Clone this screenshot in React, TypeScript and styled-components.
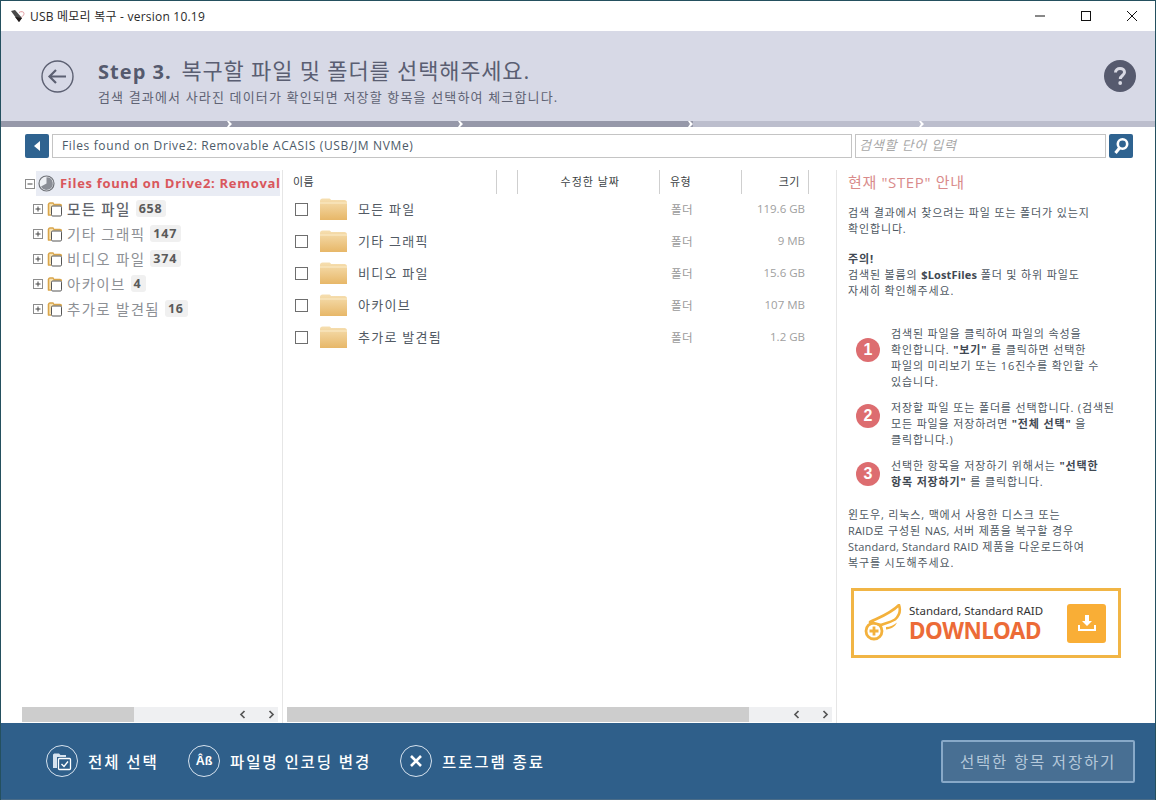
import React from "react";
import styled, { createGlobalStyle } from "styled-components";

const FONT = `"Open Sans", "Noto Sans CJK KR", sans-serif`;

const Global = createGlobalStyle`
  html, body { margin: 0; padding: 0; background: #fff; }
  * { box-sizing: border-box; }
  body { font-family: ${FONT}; }
`;

const Window = styled.div`
  width: 1156px;
  height: 800px;
  display: flex;
  flex-direction: column;
  overflow: hidden;
  border: 1px solid #24505f;
  border-bottom: 0;
  background: #fff;
`;

const TitleBar = styled.div`
  height: 30px;
  flex: none;
  display: flex;
  align-items: center;
  padding-left: 9px;
  font-size: 12px;
  color: #2a2a2a;
`;
const AppTitle = styled.span`
  margin-left: 4px;
  flex: 1;
  letter-spacing: 0.22px;
`;
const WinButton = styled.div`
  width: 46px;
  height: 30px;
  display: flex;
  align-items: center;
  justify-content: center;
`;

const Header = styled.header`
  height: 90px;
  flex: none;
  background: #d7d9e6;
  display: flex;
  align-items: center;
  padding: 0 19px 0 40px;
`;
const HeaderText = styled.div`
  margin-left: 24px;
  flex: 1;
  padding-top: 8px;
`;
const Heading = styled.h1`
  margin: 0;
  font-size: 22px;
  line-height: 28px;
  font-weight: 400;
  color: #5a5e72;
  letter-spacing: 0.82px;
  b { font-size: 20px; font-weight: 700; color: #555a6e; letter-spacing: 1.05px; margin-right: 3px; }
`;
const SubHeading = styled.p`
  margin: 3px 0 0;
  font-size: 13px;
  line-height: 16px;
  color: #5f6374;
  letter-spacing: 1.15px;
`;

const Progress = styled.div`
  height: 6px;
  flex: none;
  display: flex;
`;
const Segment = styled.div<{ $done: boolean }>`
  flex: 1;
  position: relative;
  background: ${(p) => (p.$done ? "#9698a9" : "#bcbecd")};
  svg { position: absolute; right: 0; top: 0; }
`;

const PathBar = styled.div`
  height: 24px;
  margin-top: 7px;
  flex: none;
  display: flex;
  padding-left: 24px;
`;
const BlueButton = styled.div`
  width: 24px;
  height: 24px;
  background: #2f6390;
  border-radius: 2px;
  display: flex;
  align-items: center;
  justify-content: center;
  flex: none;
`;
const PathField = styled.div`
  width: 800px;
  margin-left: 3px;
  border: 1px solid #c4c4c4;
  font-size: 12px;
  line-height: 22px;
  padding-left: 9px;
  color: #4c5a68;
  letter-spacing: 0.64px;
`;
const SearchField = styled.div`
  width: 251px;
  margin: 0 3px;
  border: 1px solid #c4c4c4;
  font-size: 13px;
  line-height: 21px;
  padding-left: 3px;
  font-style: italic;
  color: #a8a8a8;
  letter-spacing: 0.8px;
`;

const Content = styled.main`
  flex: 1;
  min-height: 0;
  display: grid;
  grid-template-columns: 282px 554px 1fr;
  margin-top: 12px;
`;

const TreePane = styled.section`
  border-right: 1px solid #e6e6e6;
  position: relative;
  padding: 1px 0 0 24px;
  display: flex;
  flex-direction: column;
`;
const RootRow = styled.div`
  height: 25px;
  display: flex;
  align-items: center;
  white-space: nowrap;
`;
const RootLabel = styled.div`
  width: 244px;
  margin-left: 1px;
  height: 25px;
  background: #e9ecf4;
  display: flex;
  align-items: center;
  padding: 0 0 2px 2px;
  font-size: 13px;
  font-weight: 700;
  color: #d9575c;
  letter-spacing: 0.7px;
  span { margin-left: 5px; }
`;
const TreeRow = styled.div`
  height: 25px;
  display: flex;
  align-items: center;
  padding-left: 8px;
`;
const TreeName = styled.span<{ $active?: boolean }>`
  margin-left: 4px;
  font-size: 14.5px;
  letter-spacing: 1.3px;
  color: ${(p) => (p.$active ? "#62656c" : "#8d9095")};
  font-weight: ${(p) => (p.$active ? 500 : 400)};
`;
const Count = styled.span`
  margin-left: 5px;
  padding: 0 4px 0 3px;
  height: 17px;
  line-height: 17px;
  border-radius: 3px;
  background: #f0f0f0;
  color: #5a5a5a;
  font-size: 12.5px;
  font-weight: 700;
  letter-spacing: 0.8px;
`;
const TreeScroll = styled.div`
  position: absolute;
  left: 21px;
  right: 4px;
  bottom: 1px;
`;

const ScrollBar = styled.div`
  height: 15px;
  background: #eff0f2;
  display: flex;
  align-items: center;
`;
const Thumb = styled.div<{ $w: number }>`
  width: ${(p) => p.$w}px;
  height: 15px;
  background: #cdcdcd;
  flex: none;
`;
const ScrollArrows = styled.div`
  margin-left: auto;
  width: 41px;
  display: flex;
  justify-content: space-between;
  padding: 0 3px 0 2px;
  align-items: center;
`;

const ListPane = styled.section`
  border-right: 1px solid #e6e6e6;
  position: relative;
  padding-left: 4px;
`;
const ListHeader = styled.div`
  height: 24px;
  display: grid;
  grid-template-columns: 210px 21px 142px 82px 67px;
  font-size: 11px;
  line-height: 24px;
  color: #3b3f44;
  letter-spacing: 0.5px;
`;
const HeadCell = styled.div<{ $align?: string; $pad?: number; $pr?: number }>`
  border-right: 1px solid #cfcfcf;
  text-align: ${(p) => p.$align ?? "left"};
  padding-left: ${(p) => p.$pad ?? 0}px;
  padding-right: ${(p) => p.$pr ?? 0}px;
`;
const DateHead = styled(HeadCell)`
  letter-spacing: 1px;
`;
const FileRows = styled.div`
  margin-top: -2px;
`;
const FileRow = styled.div`
  height: 32px;
  display: flex;
  align-items: center;
  padding-left: 8px;
`;
const Check = styled.div`
  width: 13px;
  height: 13px;
  margin-top: 2px;
  border: 1px solid #6e6e6e;
  background: #fff;
  flex: none;
`;
const FileName = styled.span`
  margin-left: 11px;
  width: 313px;
  font-size: 13px;
  letter-spacing: 1.25px;
  color: #525a64;
`;
const FileType = styled.span`
  width: 70px;
  padding-top: 1px;
  font-size: 11.5px;
  color: #9a9a9a;
  letter-spacing: 0.5px;
`;
const FileSize = styled.span`
  width: 64px;
  padding-top: 1px;
  font-size: 11.5px;
  color: #a0a0a0;
  text-align: right;
`;
const ListScroll = styled.div`
  position: absolute;
  left: 4px;
  right: 4px;
  bottom: 1px;
`;

const HelpPane = styled.aside`
  padding: 1px 0 0 11px;
  width: 300px;
  color: #4e5862;
`;
const HelpTitle = styled.h2`
  margin: 0 0 12px;
  font-size: 15px;
  line-height: 22px;
  font-weight: 400;
  color: #d98b8b;
  letter-spacing: 0.65px;
`;
const HelpText = styled.p`
  margin: 0 0 14px;
  font-size: 11px;
  line-height: 16px;
  letter-spacing: 0.85px;
  white-space: nowrap;
  b { font-weight: 700; color: #3f4852; }
`;
const Latin = styled.span`
  letter-spacing: 0.15px;
`;
const Steps = styled.div`
  margin: 27px 0 17px;
  display: flex;
  flex-direction: column;
  gap: 10px;
`;
const StepRow = styled.div`
  display: flex;
  align-items: center;
`;
const StepBullet = styled.div<{ $lift: number }>`
  width: 24px;
  height: 24px;
  margin: 0 11px ${(p) => p.$lift}px 8px;
  border-radius: 50%;
  background: #dd6d70;
  color: #fff;
  font-family: "Liberation Sans", sans-serif;
  font-weight: 700;
  font-size: 16px;
  display: flex;
  align-items: center;
  justify-content: center;
  flex: none;
`;
const StepText = styled(HelpText)`
  margin: 0;
`;
const Banner = styled.div`
  margin: 17px 0 0 3px;
  width: 270px;
  height: 70px;
  border: 3px solid #f1b545;
  display: flex;
  align-items: center;
  padding-left: 10px;
`;
const BannerText = styled.div`
  margin-left: 7px;
  padding-top: 2px;
  flex: 1;
`;
const BannerSmall = styled.div`
  font-size: 11.5px;
  line-height: 14px;
  color: #333;
  font-family: "Noto Sans", sans-serif;
`;
const BannerBig = styled.div`
  font-size: 22.5px;
  line-height: 26px;
  font-weight: 700;
  letter-spacing: -0.45px;
  color: #ec6b37;
  font-family: "Noto Sans", sans-serif;
`;
const BannerIcon = styled.div`
  width: 39px;
  height: 39px;
  margin-right: 12px;
  border-radius: 3px;
  background: #f9ae36;
  display: flex;
  align-items: center;
  justify-content: center;
`;

const Footer = styled.footer`
  height: 77px;
  flex: none;
  margin: 0 -1px;
  background: #2f5f8a;
  border-bottom: 1px solid #4a6c88;
  display: flex;
  align-items: center;
  padding: 0 21px 0 46px;
`;
const FootAction = styled.div<{ $w: number }>`
  width: ${(p) => p.$w}px;
  display: flex;
  align-items: center;
  color: #fff;
  font-size: 15.5px;
  font-weight: 500;
  letter-spacing: 1.9px;
`;
const FootIcon = styled.div`
  width: 32px;
  height: 32px;
  border: 1.5px solid #d6e2ee;
  border-radius: 50%;
  margin-right: 10px;
  display: flex;
  align-items: center;
  justify-content: center;
  flex: none;
  font-family: "Liberation Sans", sans-serif;
  font-size: 12.5px;
  font-weight: 700;
  letter-spacing: 0;
`;
const SaveButton = styled.div`
  margin-left: auto;
  width: 194px;
  height: 43px;
  border: 2px solid #88a9c8;
  border-radius: 2px;
  background: #486f93;
  color: #b5c8da;
  display: flex;
  align-items: center;
  justify-content: center;
  font-size: 15.5px;
  letter-spacing: 1.8px;
`;

const Chevron = ({ dir }: { dir: "l" | "r" }) => (
  <svg width="8" height="9" viewBox="0 0 8 9">
    <path d={dir === "l" ? "M5.5 1L2 4.5L5.5 8" : "M2.5 1L6 4.5L2.5 8"} fill="none" stroke="#555" strokeWidth="1.7" />
  </svg>
);

const AppIcon = () => (
  <svg width="16" height="14" viewBox="0 0 16 14">
    <path d="M1 2L5 1L12 9L9 13Z" fill="#4a4a4a" />
    <path d="M5 8L9 13L12 9Z" fill="#1f1a1a" />
    <path d="M9 3.5C11 2 14 2.5 14 4.5C14 6 12.5 7.5 11.5 8" fill="none" stroke="#e29aa0" strokeWidth="1" />
  </svg>
);

const PlusBox = ({ minus }: { minus?: boolean }) => (
  <svg width="10" height="10" viewBox="0 0 10 10" style={{ flex: "none" }}>
    <rect x="0.5" y="0.5" width="9" height="9" fill="#fff" stroke="#8c8c8c" />
    <path d={minus ? "M2.5 5H7.5" : "M2.5 5H7.5M5 2.5V7.5"} stroke="#444" strokeWidth="1" />
  </svg>
);

const TreeFolder = () => (
  <svg width="16" height="16" viewBox="0 0 16 16" style={{ marginLeft: 4, flex: "none" }}>
    <path d="M1.5 14V3.5C1.5 2.5 2 2 3 2H6L7 3.5H13C14 3.5 14.5 4 14.5 5" fill="#f7e3b4" stroke="#d9a54a" strokeWidth="1.3" />
    <path d="M1.5 3V14H4" fill="none" stroke="#d9a54a" strokeWidth="1.3" />
    <rect x="4.5" y="5" width="10" height="10" rx="1.2" fill="#fff" stroke="#555" strokeWidth="1" />
  </svg>
);

const PieIcon = () => (
  <svg width="17" height="17" viewBox="0 0 17 17" style={{ flex: "none", marginTop: 2 }}>
    <circle cx="8.5" cy="8.5" r="7.5" fill="#eef0f4" stroke="#6f7278" strokeWidth="1.2" />
    <path d="M8.5 8.5V2.2A6.3 6.3 0 1 1 3 11.6Z" fill="#8b8e96" />
  </svg>
);

const Folder = () => (
  <svg width="27" height="22" viewBox="0 0 27 22" style={{ marginLeft: 12, marginTop: 2, flex: "none" }}>
    <defs>
      <linearGradient id="fg" x1="0" y1="0" x2="0" y2="1">
        <stop offset="0" stopColor="#f6dfb1" />
        <stop offset="1" stopColor="#e7b768" />
      </linearGradient>
    </defs>
    <path d="M0 3C0 1.5 1 .5 2.5 .5H9C10 .5 10.5 1 11 2H24.5C26 2 27 3 27 4.5V22H0Z" fill="url(#fg)" />
    <path d="M0 5H27" stroke="#fbecc9" strokeWidth="1" />
  </svg>
);

const Wing = () => (
  <svg width="38" height="38" viewBox="0 0 38 38" style={{ flex: "none" }}>
    <circle cx="10" cy="27" r="8" fill="none" stroke="#f3b13c" strokeWidth="2.8" />
    <path d="M5.5 27H14.5M10 22.5V31.5" stroke="#f3b13c" strokeWidth="2.8" />
    <path d="M6 18C14 14 26 10 35 1C37 7 35 12 31 15.5C25 19 21 19 17 21Z" fill="#fff" stroke="#f3b13c" strokeWidth="2.6" strokeLinejoin="round" />
    <path d="M22 23C26 23 30 21 33 18.5C31 23 27 25 22 25.5Z" fill="#f3b13c" />
  </svg>
);

const treeItems = [
  { name: "모든 파일", count: "658", active: true },
  { name: "기타 그래픽", count: "147" },
  { name: "비디오 파일", count: "374" },
  { name: "아카이브", count: "4" },
  { name: "추가로 발견됨", count: "16" },
];

const files = [
  { name: "모든 파일", size: "119.6 GB" },
  { name: "기타 그래픽", size: "9 MB" },
  { name: "비디오 파일", size: "15.6 GB" },
  { name: "아카이브", size: "107 MB" },
  { name: "추가로 발견됨", size: "1.2 GB" },
];

const steps = [
  {
    n: "1",
    lift: 16,
    body: (
      <>
        검색된 파일을 클릭하여 파일의 속성을
        <br />
        확인합니다. <b>"보기"</b> 를 클릭하면 선택한
        <br />
        파일의 미리보기 또는 16진수를 확인할 수
        <br />
        있습니다.
      </>
    ),
  },
  {
    n: "2",
    lift: 16,
    body: (
      <>
        저장할 파일 또는 폴더를 선택합니다. (검색된
        <br />
        모든 파일을 저장하려면 <b>"전체 선택"</b> 을
        <br />
        클릭합니다.)
      </>
    ),
  },
  {
    n: "3",
    lift: 0,
    body: (
      <>
        선택한 항목을 저장하기 위해서는 <b>"선택한</b>
        <br />
        <b>항목 저장하기"</b> 를 클릭합니다.
      </>
    ),
  },
];

const Scroller = ({ thumb }: { thumb: number }) => (
  <ScrollBar>
    <Thumb $w={thumb} />
    <ScrollArrows>
      <Chevron dir="l" />
      <Chevron dir="r" />
    </ScrollArrows>
  </ScrollBar>
);

export default function App() {
  return (
    <>
      <Global />
      <Window>
        <TitleBar>
          <AppIcon />
          <AppTitle>USB 메모리 복구 - version 10.19</AppTitle>
          <WinButton>
            <svg width="12" height="12" viewBox="0 0 12 12">
              <path d="M1 6H11" stroke="#111" strokeWidth="1" />
            </svg>
          </WinButton>
          <WinButton>
            <svg width="12" height="12" viewBox="0 0 12 12">
              <rect x="1.5" y="1.5" width="9" height="9" fill="none" stroke="#111" strokeWidth="1" />
            </svg>
          </WinButton>
          <WinButton>
            <svg width="12" height="12" viewBox="0 0 12 12">
              <path d="M1 1L11 11M11 1L1 11" stroke="#111" strokeWidth="1" />
            </svg>
          </WinButton>
        </TitleBar>

        <Header>
          <svg width="33" height="33" viewBox="0 0 33 33" style={{ flex: "none" }}>
            <circle cx="16.5" cy="16.5" r="15.5" fill="none" stroke="#5c6072" strokeWidth="1.4" />
            <path d="M25 16.5H9M15 10L8.5 16.5L15 23" fill="none" stroke="#5c6072" strokeWidth="2.2" />
          </svg>
          <HeaderText>
            <Heading>
              <b>Step 3.</b> 복구할 파일 및 폴더를 선택해주세요.
            </Heading>
            <SubHeading>검색 결과에서 사라진 데이터가 확인되면 저장할 항목을 선택하여 체크합니다.</SubHeading>
          </HeaderText>
          <svg width="32" height="32" viewBox="0 0 32 32" style={{ flex: "none" }}>
            <circle cx="16" cy="16" r="16" fill="#565a6e" />
            <path d="M11.5 12.5C11.5 10 13.5 8.5 16 8.5C18.5 8.5 20.5 10 20.5 12.3C20.5 15.5 16.3 15.5 16.3 19" fill="none" stroke="#d9dae4" strokeWidth="3" />
            <circle cx="16.2" cy="23" r="1.9" fill="#d9dae4" />
          </svg>
        </Header>

        <Progress>
          {[true, true, true, false, false].map((done, i) => (
            <Segment key={i} $done={done}>
              {i < 4 && (
                <svg width="5" height="6" viewBox="0 0 5 6">
                  <path d="M0 0H2L5 3L2 6H0L2 3Z" fill="#fff" />
                </svg>
              )}
            </Segment>
          ))}
        </Progress>

        <PathBar>
          <BlueButton>
            <svg width="8" height="10" viewBox="0 0 8 10">
              <path d="M7 0V10L1 5Z" fill="#fff" />
            </svg>
          </BlueButton>
          <PathField>Files found on Drive2: Removable ACASIS (USB/JM NVMe)</PathField>
          <SearchField>검색할 단어 입력</SearchField>
          <BlueButton>
            <svg width="18" height="18" viewBox="0 0 18 18">
              <circle cx="10.5" cy="7" r="4.7" fill="none" stroke="#fff" strokeWidth="2.6" />
              <path d="M7.5 11L3.5 16" stroke="#fff" strokeWidth="3" />
            </svg>
          </BlueButton>
        </PathBar>

        <Content>
          <TreePane>
            <RootRow>
              <PlusBox minus />
              <RootLabel>
                <PieIcon />
                <span>Files found on Drive2: Removal</span>
              </RootLabel>
            </RootRow>
            {treeItems.map((t) => (
              <TreeRow key={t.name}>
                <PlusBox />
                <TreeFolder />
                <TreeName $active={t.active}>{t.name}</TreeName>
                <Count>{t.count}</Count>
              </TreeRow>
            ))}
            <TreeScroll>
              <Scroller thumb={112} />
            </TreeScroll>
          </TreePane>

          <ListPane>
            <ListHeader>
              <HeadCell $pad={6}>이름</HeadCell>
              <HeadCell />
              <DateHead $align="right" $pr={39}>수정한 날짜</DateHead>
              <HeadCell $pad={10}>유형</HeadCell>
              <HeadCell $align="right" $pr={8}>크기</HeadCell>
            </ListHeader>
            <FileRows>
              {files.map((f) => (
                <FileRow key={f.name}>
                  <Check />
                  <Folder />
                  <FileName>{f.name}</FileName>
                  <FileType>폴더</FileType>
                  <FileSize>{f.size}</FileSize>
                </FileRow>
              ))}
            </FileRows>
            <ListScroll>
              <Scroller thumb={462} />
            </ListScroll>
          </ListPane>

          <HelpPane>
            <HelpTitle>현재 "STEP" 안내</HelpTitle>
            <HelpText>
              검색 결과에서 찾으려는 파일 또는 폴더가 있는지
              <br />
              확인합니다.
            </HelpText>
            <HelpText>
              <b>주의!</b>
              <br />
              검색된 볼륨의 <b><Latin>$LostFiles</Latin></b> 폴더 및 하위 파일도
              <br />
              자세히 확인해주세요.
            </HelpText>
            <Steps>
              {steps.map((s) => (
                <StepRow key={s.n}>
                  <StepBullet $lift={s.lift}>{s.n}</StepBullet>
                  <StepText>{s.body}</StepText>
                </StepRow>
              ))}
            </Steps>
            <HelpText>
              윈도우, 리눅스, 맥에서 사용한 디스크 또는
              <br />
              <Latin>RAID</Latin>로 구성된 <Latin>NAS,</Latin> 서버 제품을 복구할 경우
              <br />
              <Latin>Standard, Standard RAID</Latin> 제품을 다운로드하여
              <br />
              복구를 시도해주세요.
            </HelpText>
            <Banner>
              <Wing />
              <BannerText>
                <BannerSmall>Standard, Standard RAID</BannerSmall>
                <BannerBig>DOWNLOAD</BannerBig>
              </BannerText>
              <BannerIcon>
                <svg width="20" height="20" viewBox="0 0 20 20">
                  <path d="M8 2H12V8H15L10 13L5 8H8Z" fill="#fff" />
                  <path d="M2 12V17H18V12" fill="none" stroke="#fff" strokeWidth="2" />
                </svg>
              </BannerIcon>
            </Banner>
          </HelpPane>
        </Content>

        <Footer>
          <FootAction $w={142}>
            <FootIcon>
              <svg width="22" height="22" viewBox="0 0 22 22">
                <path d="M2 18V5C2 4 3 3.5 4 3.5H8L9.5 5H15V7H6V18Z" fill="#d6e2ee" />
                <rect x="7.5" y="8.5" width="12" height="11" rx="1" fill="#2f5f8a" stroke="#fff" strokeWidth="1.3" />
                <path d="M10.5 14L13 16.5L17 11.5" fill="none" stroke="#fff" strokeWidth="1.4" />
              </svg>
            </FootIcon>
            전체 선택
          </FootAction>
          <FootAction $w={212}>
            <FootIcon>Âß</FootIcon>
            파일명 인코딩 변경
          </FootAction>
          <FootAction $w={180}>
            <FootIcon>
              <svg width="14" height="14" viewBox="0 0 14 14">
                <path d="M2 2L12 12M12 2L2 12" stroke="#fff" strokeWidth="2.6" />
              </svg>
            </FootIcon>
            프로그램 종료
          </FootAction>
          <SaveButton>선택한 항목 저장하기</SaveButton>
        </Footer>
      </Window>
    </>
  );
}
